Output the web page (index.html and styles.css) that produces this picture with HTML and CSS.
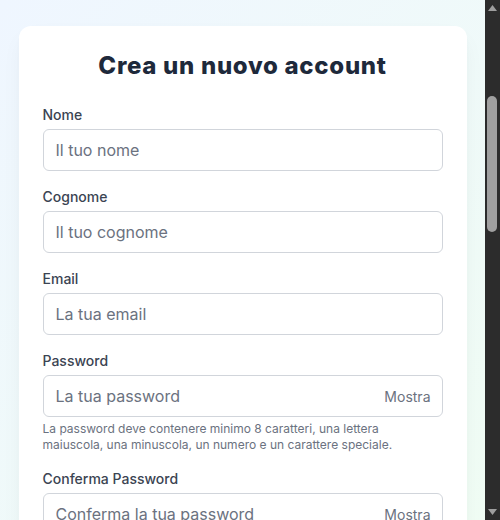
FILE: index.html
```html
<!DOCTYPE html>
<html lang="it">
<head>
<meta charset="utf-8">
<title>Crea un nuovo account</title>
<link rel="stylesheet" href="styles.css">
</head>
<body>
<main class="page">
  <div class="card">
    <h1 class="title">Crea un nuovo account</h1>
    <form class="form">
      <div class="field">
        <label class="label" for="nome">Nome</label>
        <input class="input" id="nome" type="text" placeholder="Il tuo nome">
      </div>
      <div class="field">
        <label class="label" for="cognome">Cognome</label>
        <input class="input" id="cognome" type="text" placeholder="Il tuo cognome">
      </div>
      <div class="field">
        <label class="label" for="email">Email</label>
        <input class="input" id="email" type="email" placeholder="La tua email">
      </div>
      <div class="field">
        <label class="label" for="password">Password</label>
        <div class="pw">
          <input class="input" id="password" type="password" placeholder="La tua password">
          <button type="button" class="toggle">Mostra</button>
        </div>
        <p class="help">La password deve contenere minimo 8 caratteri, una lettera maiuscola, una minuscola, un numero e un carattere speciale.</p>
      </div>
      <div class="field">
        <label class="label" for="conferma">Conferma Password</label>
        <div class="pw">
          <input class="input" id="conferma" type="password" placeholder="Conferma la tua password">
          <button type="button" class="toggle">Mostra</button>
        </div>
      </div>
      <button type="submit" class="submit">Registrati</button>
    </form>
  </div>
</main>
<div class="scrollbar" aria-hidden="true">
  <svg class="arrow" width="15" height="15" viewBox="0 0 15 15"><path d="M3 11 L7.5 5 L12 11 Z" fill="#9e9e9e"/></svg>
  <div class="track"><div class="thumb"></div></div>
  <svg class="arrow" width="15" height="15" viewBox="0 0 15 15"><path d="M3 4 L7.5 10 L12 4 Z" fill="#9e9e9e"/></svg>
</div>
</body>
</html>
```

FILE: styles.css
```css
html, body {
  margin: 0;
  height: 100%;
  overflow: hidden;
}
body {
  font-family: Inter, "Noto Sans", sans-serif;
  color: #1f2937;
  background: linear-gradient(to bottom right, #eff6ff, #f0fdf4);
}
.page {
  box-sizing: border-box;
  margin-right: 15px;
  padding: 26px 0 48px;
  display: flex;
  justify-content: center;
  align-items: flex-start;
}
.card {
  width: 448px;
  box-sizing: border-box;
  background: #fff;
  border-radius: 12px;
  box-shadow: 0 10px 25px -5px rgba(0,0,0,0.06), 0 4px 10px -4px rgba(0,0,0,0.04);
  padding: 24px;
}
.title {
  margin: 0 0 23px;
  text-align: center;
  font-family: Inter, sans-serif;
  font-weight: 800;
  font-size: 24px;
  line-height: 32px;
  letter-spacing: 0.7px;
  color: #1e293b;
}
.form {
  display: flex;
  flex-direction: column;
  gap: 16px;
}
.field {
  display: flex;
  flex-direction: column;
  gap: 4px;
}
.label {
  font-size: 14px;
  line-height: 20px;
  font-weight: 500;
  color: #3b4452;
}
.input {
  box-sizing: border-box;
  width: 100%;
  height: 42px;
  padding: 10px 12px;
  border: 1px solid #d1d5db;
  border-radius: 6px;
  font-family: Inter, sans-serif;
  font-size: 16px;
  color: #111827;
  background: #fff;
}
.input::placeholder {
  color: #6b7280;
}
.pw {
  position: relative;
}
.toggle {
  position: absolute;
  right: 12px;
  top: 0;
  bottom: 0;
  padding: 0;
  border: 0;
  background: none;
  font-family: Inter, sans-serif;
  font-size: 14px;
  color: #6b7280;
}
.help {
  margin: 0;
  font-size: 12px;
  line-height: 16px;
  color: #6b7280;
}
.submit {
  height: 42px;
  border: 0;
  border-radius: 6px;
  background: #2563eb;
  color: #fff;
  font-family: Inter, sans-serif;
  font-size: 16px;
  font-weight: 600;
}
.scrollbar {
  position: fixed;
  top: 0;
  right: 0;
  bottom: 0;
  width: 15px;
  background: #2c2c2c;
  display: flex;
  flex-direction: column;
}
.arrow {
  display: block;
  flex: none;
}
.track {
  flex: 1;
  padding-top: 81px;
}
.thumb {
  width: 10px;
  height: 136px;
  margin-left: 2px;
  border-radius: 5px;
  background: #a0a0a0;
}
```
